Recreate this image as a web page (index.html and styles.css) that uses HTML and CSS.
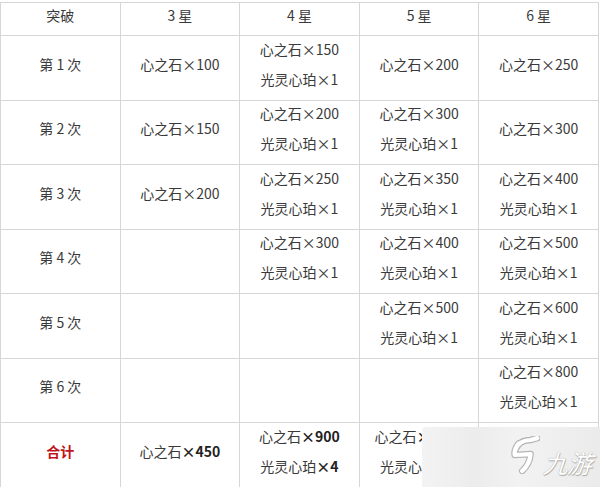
FILE: index.html
```html
<!DOCTYPE html>
<html lang="zh">
<head>
<meta charset="utf-8">
<link rel="stylesheet" href="styles.css">
</head>
<body>
<div class="page">
<table class="tbl">
  <colgroup><col class="c"><col class="c"><col class="c"><col class="c"><col class="c"></colgroup>
  <tr class="head"><td><div class="v">突破</div></td><td><div class="v">3 星</div></td><td><div class="v">4 星</div></td><td><div class="v">5 星</div></td><td><div class="v">6 星</div></td></tr>
  <tr class="row">
    <td><div class="v">第 1 次</div></td>
    <td><div class="v">心之石×100</div></td>
    <td><div class="v"><div class="ln">心之石×150</div><div class="ln">光灵心珀×1</div></div></td>
    <td><div class="v">心之石×200</div></td>
    <td><div class="v">心之石×250</div></td>
  </tr>
  <tr class="row">
    <td><div class="v">第 2 次</div></td>
    <td><div class="v">心之石×150</div></td>
    <td><div class="v"><div class="ln">心之石×200</div><div class="ln">光灵心珀×1</div></div></td>
    <td><div class="v"><div class="ln">心之石×300</div><div class="ln">光灵心珀×1</div></div></td>
    <td><div class="v">心之石×300</div></td>
  </tr>
  <tr class="row">
    <td><div class="v">第 3 次</div></td>
    <td><div class="v">心之石×200</div></td>
    <td><div class="v"><div class="ln">心之石×250</div><div class="ln">光灵心珀×1</div></div></td>
    <td><div class="v"><div class="ln">心之石×350</div><div class="ln">光灵心珀×1</div></div></td>
    <td><div class="v"><div class="ln">心之石×400</div><div class="ln">光灵心珀×1</div></div></td>
  </tr>
  <tr class="row">
    <td><div class="v">第 4 次</div></td>
    <td></td>
    <td><div class="v"><div class="ln">心之石×300</div><div class="ln">光灵心珀×1</div></div></td>
    <td><div class="v"><div class="ln">心之石×400</div><div class="ln">光灵心珀×1</div></div></td>
    <td><div class="v"><div class="ln">心之石×500</div><div class="ln">光灵心珀×1</div></div></td>
  </tr>
  <tr class="row">
    <td><div class="v">第 5 次</div></td>
    <td></td>
    <td></td>
    <td><div class="v"><div class="ln">心之石×500</div><div class="ln">光灵心珀×1</div></div></td>
    <td><div class="v"><div class="ln">心之石×600</div><div class="ln">光灵心珀×1</div></div></td>
  </tr>
  <tr class="row">
    <td><div class="v">第 6 次</div></td>
    <td></td>
    <td></td>
    <td></td>
    <td><div class="v"><div class="ln">心之石×800</div><div class="ln">光灵心珀×1</div></div></td>
  </tr>
  <tr class="row total">
    <td><div class="v red">合计</div></td>
    <td><div class="v">心之石<b>×450</b></div></td>
    <td><div class="v"><div class="ln">心之石<b>×900</b></div><div class="ln">光灵心珀<b>×4</b></div></div></td>
    <td><div class="v"><div class="ln">心之石<b>×1350</b></div><div class="ln">光灵心珀<b>×5</b></div></div></td>
    <td><div class="v"><div class="ln">心之石<b>×1800</b></div><div class="ln">光灵心珀<b>×6</b></div></div></td>
  </tr>
</table>
<div class="wm">
  <svg class="wm-logo" viewBox="0 0 32 40" width="30" height="38">
    <g fill="none" stroke-linecap="round" stroke-linejoin="round">
      <path d="M6 14 Q10 4 22 4 L29 2 M9 8 Q4 14 5 20 L22 19 Q21 30 13 37" stroke="#b5b5b5" stroke-width="7"/>
      <path d="M6 14 Q10 4 22 4 L29 2 M9 8 Q4 14 5 20 L22 19 Q21 30 13 37" stroke="#ffffff" stroke-width="4.5"/>
    </g>
  </svg>
  <span class="wm-text">九游</span>
</div>
</div>
</body>
</html>
```
FILE: styles.css
```css
html, body {
  margin: 0;
  padding: 0;
  background: #fff;
}
.page {
  position: relative;
  width: 600px;
  height: 487px;
  overflow: hidden;
  padding-top: 2px;
  box-sizing: border-box;
}
.tbl {
  border-collapse: collapse;
  table-layout: fixed;
  width: 598px;
  font-family: "Noto Sans CJK SC", "Noto Sans", sans-serif;
  font-size: 14px;
  color: #3a3a3a;
}
.c { width: 119.6px; }
.tbl td {
  border: 1px solid #d6d6d6;
  text-align: center;
  vertical-align: middle;
  padding: 0;
  line-height: 20px;
}
.head td { height: 32px; }
.row td { height: 63.5px; }
.v { margin-top: -8px; }
.ln { line-height: 30px; }
.tbl b { font-weight: 700; color: #222; }
.red { color: #c0141c; font-weight: 700; }
.wm {
  position: absolute;
  left: 422px;
  top: 427px;
  width: 178px;
  height: 60px;
  background: linear-gradient(90deg, #f3f3f3 0%, #ececec 30%, #f2f2f2 55%, #ebebeb 100%);
  border-radius: 4px 0 0 0;
  display: flex;
  align-items: center;
  justify-content: flex-end;
  gap: 6px;
  padding-right: 6px;
  padding-top: 2px;
  box-sizing: border-box;
}
.wm-logo { display: block; margin-top: -6px; }
.wm-text {
  font-family: "Noto Sans CJK SC", sans-serif;
  font-size: 25px;
  line-height: 30px;
  font-weight: 400;
  color: #fff;
  text-shadow: 0 0 1px #9a9a9a, 1px 1px 1px #a8a8a8;
  letter-spacing: -1px;
  transform: skewX(-18deg);
  display: inline-block;
  margin-top: 8px;
}
```
